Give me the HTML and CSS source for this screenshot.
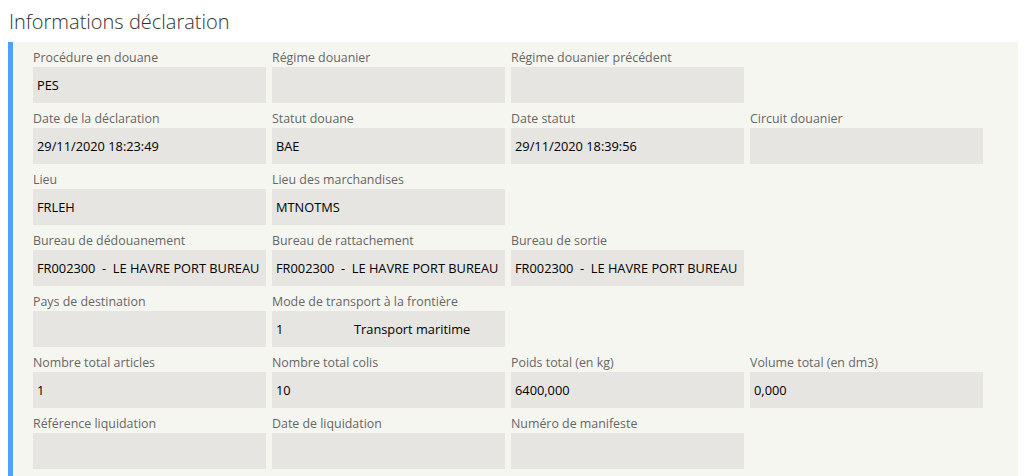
FILE: index.html
```html
<!DOCTYPE html>
<html lang="fr">
<head>
    <meta charset="UTF-8">
    <title>Informations déclaration</title>
    <link rel="stylesheet" href="styles.css">
</head>
<body>
    <div class="page">
        <h2 class="section-title">Informations déclaration</h2>
        <div class="panel">
            <div class="grid">
                <div class="field"><label>Procédure en douane</label><div class="value">PES</div></div>
                <div class="field"><label>Régime douanier</label><div class="value"></div></div>
                <div class="field"><label>Régime douanier précédent</label><div class="value"></div></div>
                <div class="spacer"></div>

                <div class="field"><label>Date de la déclaration</label><div class="value">29/11/2020 18:23:49</div></div>
                <div class="field"><label>Statut douane</label><div class="value">BAE</div></div>
                <div class="field"><label>Date statut</label><div class="value">29/11/2020 18:39:56</div></div>
                <div class="field"><label>Circuit douanier</label><div class="value"></div></div>

                <div class="field"><label>Lieu</label><div class="value">FRLEH</div></div>
                <div class="field"><label>Lieu des marchandises</label><div class="value">MTNOTMS</div></div>
                <div class="spacer"></div>
                <div class="spacer"></div>

                <div class="field"><label>Bureau de dédouanement</label><div class="value">FR002300&nbsp; - &nbsp;LE HAVRE PORT BUREAU</div></div>
                <div class="field"><label>Bureau de rattachement</label><div class="value">FR002300&nbsp; - &nbsp;LE HAVRE PORT BUREAU</div></div>
                <div class="field"><label>Bureau de sortie</label><div class="value">FR002300&nbsp; - &nbsp;LE HAVRE PORT BUREAU</div></div>
                <div class="spacer"></div>

                <div class="field"><label>Pays de destination</label><div class="value"></div></div>
                <div class="field"><label>Mode de transport à la frontière</label><div class="value"><span class="code">1</span><span>Transport maritime</span></div></div>
                <div class="spacer"></div>
                <div class="spacer"></div>

                <div class="field"><label>Nombre total articles</label><div class="value">1</div></div>
                <div class="field"><label>Nombre total colis</label><div class="value">10</div></div>
                <div class="field"><label>Poids total (en kg)</label><div class="value">6400,000</div></div>
                <div class="field"><label>Volume total (en dm3)</label><div class="value">0,000</div></div>

                <div class="field"><label>Référence liquidation</label><div class="value"></div></div>
                <div class="field"><label>Date de liquidation</label><div class="value"></div></div>
                <div class="field"><label>Numéro de manifeste</label><div class="value"></div></div>
                <div class="spacer"></div>
            </div>
        </div>
    </div>
</body>
</html>
```

FILE: styles.css
```css
* {
    box-sizing: border-box;
    margin: 0;
    padding: 0;
}
body {
    font-family: "Open Sans", "Noto Sans", sans-serif;
    background-color: #fff;
    color: #000;
}
.page {
    padding: 8px 8px 0;
}
.section-title {
    font-size: 20px;
    font-weight: 300;
    color: #333;
    line-height: 28px;
    padding-left: 1px;
    margin-bottom: 6px;
}
.panel {
    background: #f6f6f1;
    border-left: 5px solid #4da3fb;
    padding: 0 0 20px 20px;
}
.grid {
    display: grid;
    grid-template-columns: repeat(4, 233px);
    column-gap: 6px;
}
.field label {
    display: block;
    font-size: 12.4px;
    line-height: 19px;
    padding-top: 6px;
    color: #666;
    white-space: nowrap;
}
.field .value {
    height: 36px;
    background: #e6e5e2;
    padding: 0 4px;
    font-size: 12.8px;
    line-height: 36px;
    color: #000;
    white-space: nowrap;
    overflow: hidden;
    display: flex;
}
.field .value .code {
    width: 78px;
}
```
